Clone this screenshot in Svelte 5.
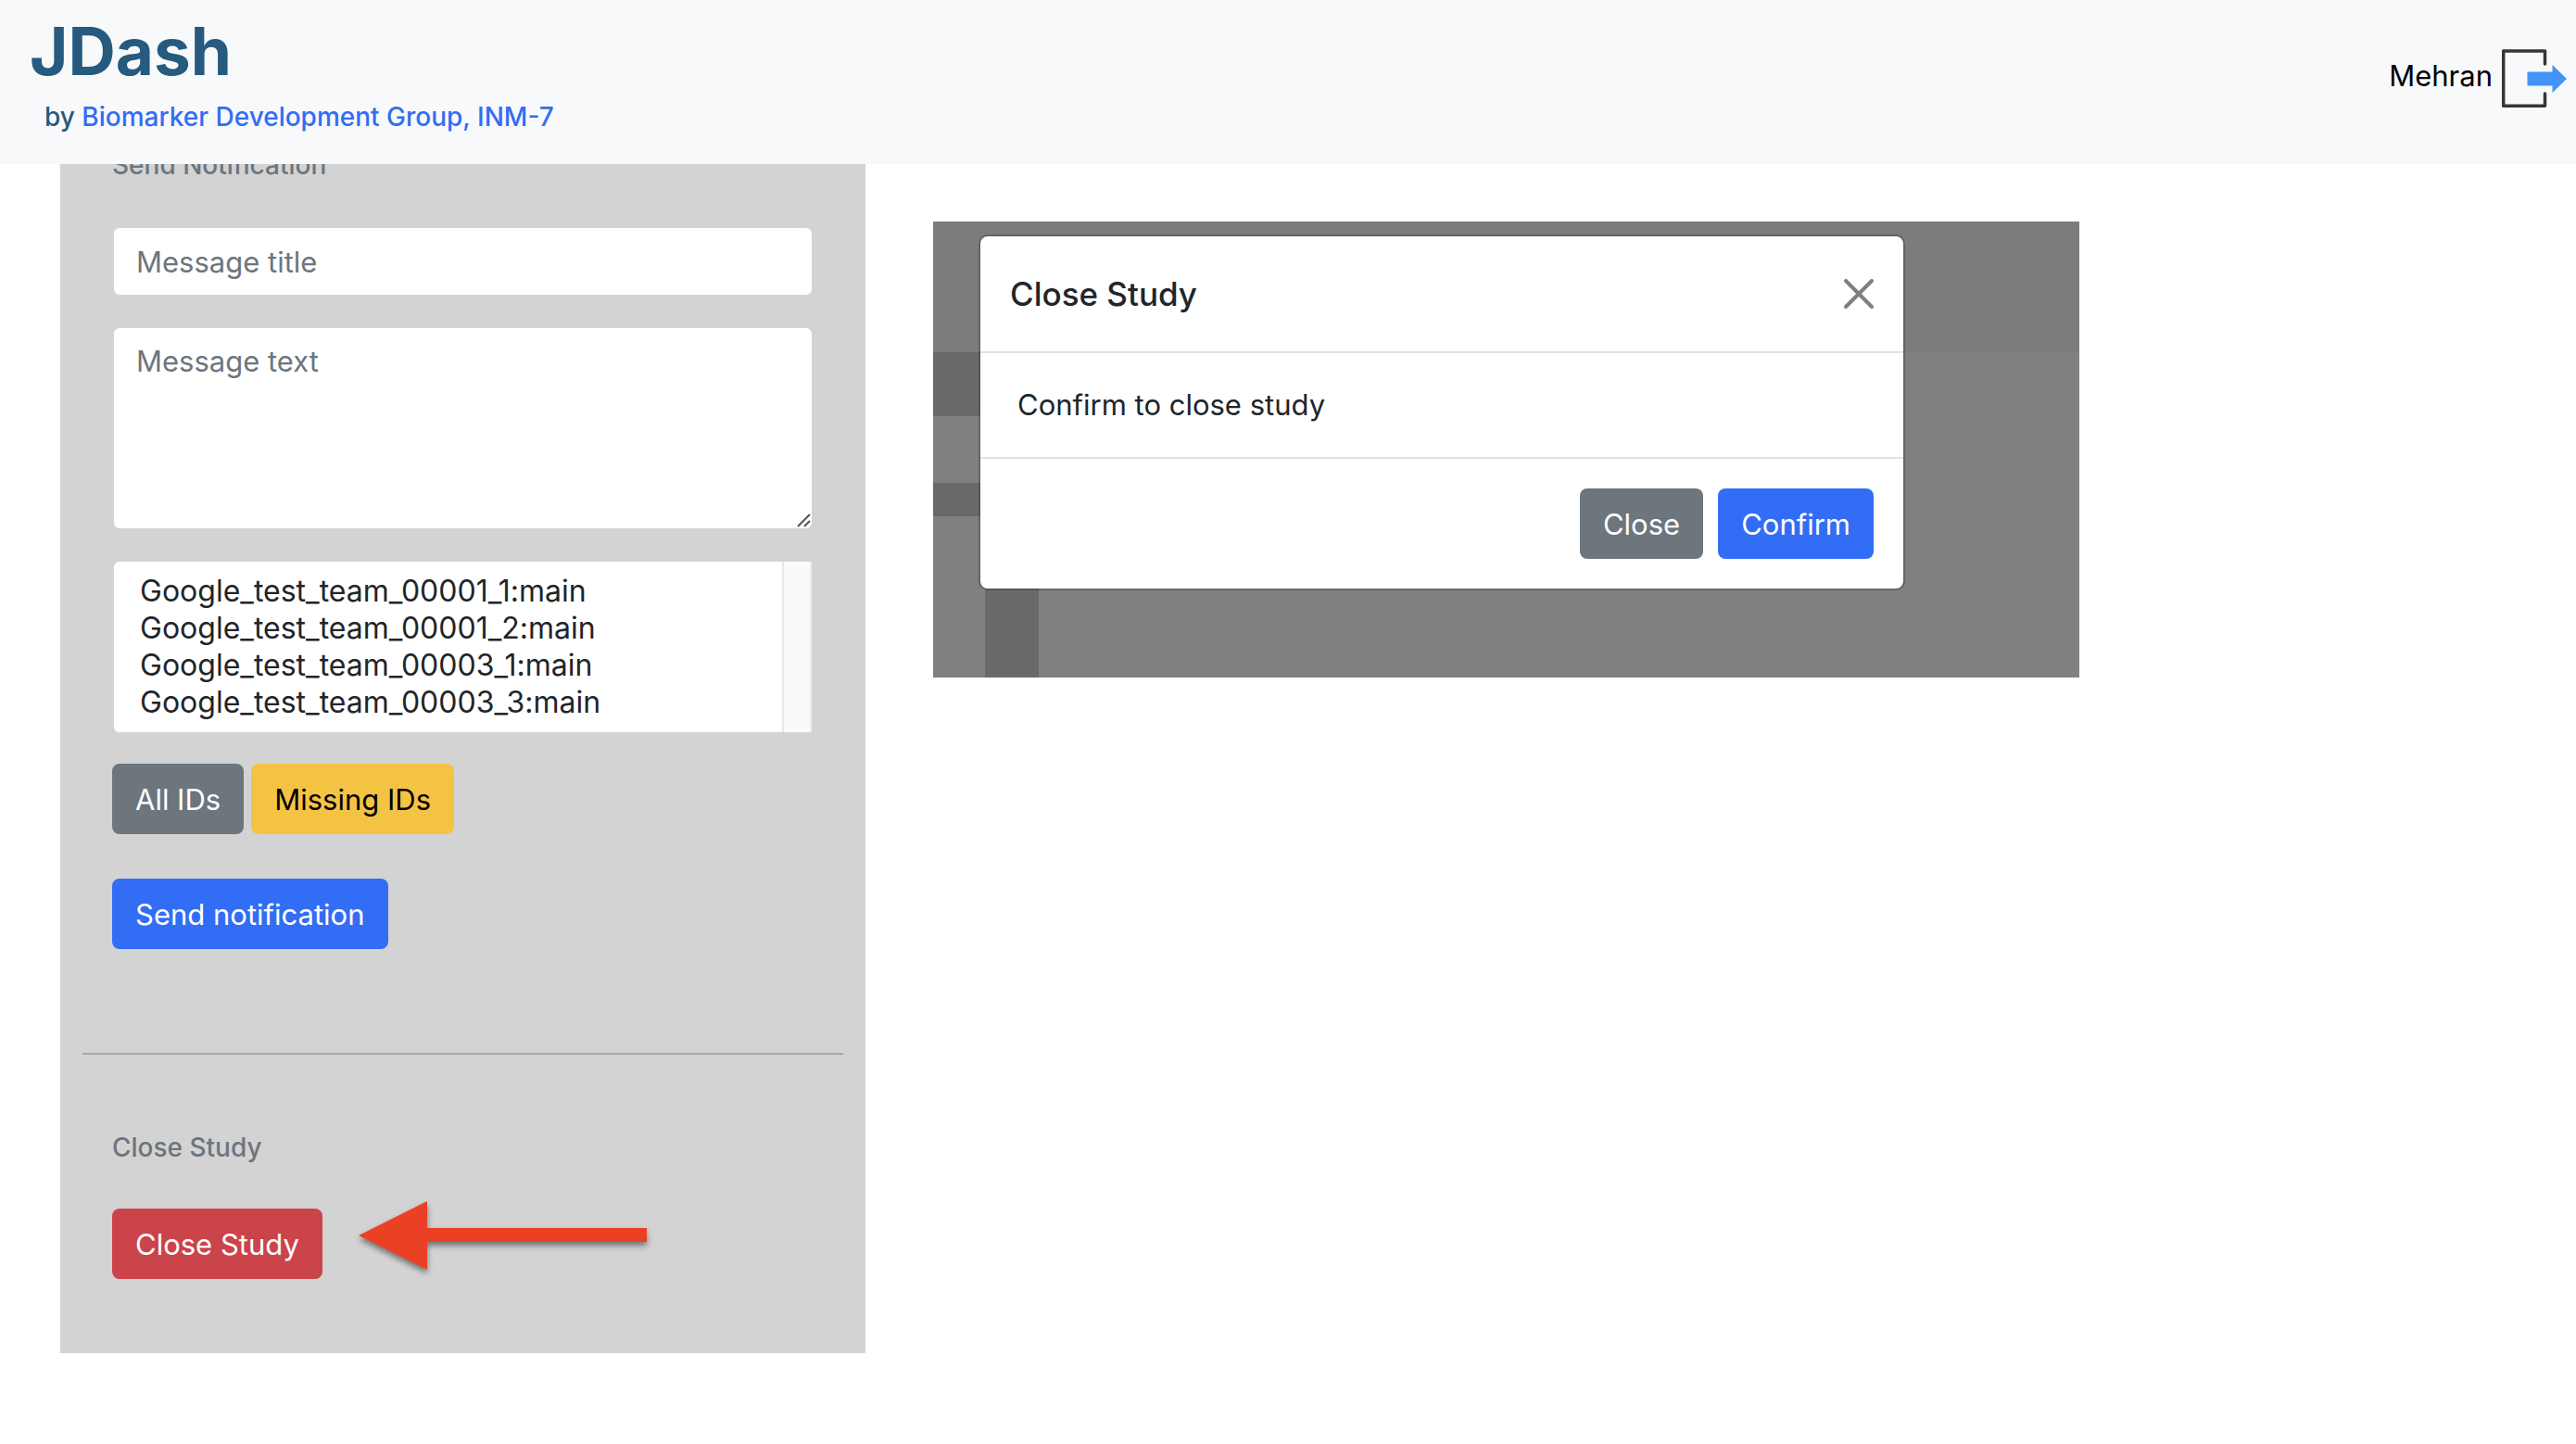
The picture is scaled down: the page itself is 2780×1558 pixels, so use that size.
<script>
  const ids = [
    'Google_test_team_00001_1:main',
    'Google_test_team_00001_2:main',
    'Google_test_team_00003_1:main',
    'Google_test_team_00003_3:main'
  ];
  let title = $state('');
  let text = $state('');
  let receivers = $state([]);
</script>

<header class="topbar">
  <div class="brand">
    <h1>JDash</h1>
    <p class="byline">by <a href="#group">Biomarker Development Group, INM-7</a></p>
  </div>
  <button class="logout" type="button" aria-label="Log out Mehran">
    <span>Mehran</span>
    <svg class="exit" viewBox="0 0 72 66" aria-hidden="true">
      <path d="M46.500 17V3H1.700V62.300H46.500V49" fill="none" stroke="#353735" stroke-width="3.500" stroke-linecap="round" stroke-linejoin="round" />
      <path d="M27.500 25.500H54.500V18L70 33L54.500 48V40.500H27.500Z" fill="#4494f8" />
    </svg>
  </button>
</header>

<main class="page">
  <section class="panel">
    <form class="notify" onsubmit={(e) => e.preventDefault()}>
      <h2>Send Notification</h2>
      <input class="field" type="text" placeholder="Message title" aria-label="Message title" bind:value={title} />
      <div class="area">
        <textarea class="field" placeholder="Message text" aria-label="Message text" bind:value={text}></textarea>
        <svg class="grip" viewBox="0 0 16 16" aria-hidden="true">
          <path d="M2 15L15 2M9 15L15 9" stroke="#555" stroke-width="2" />
        </svg>
      </div>
      <div class="list">
        <select multiple size="4" aria-label="Receivers" bind:value={receivers}>
          {#each ids as id}
            <option value={id}>{id}</option>
          {/each}
        </select>
        <span class="track"></span>
      </div>
      <div class="row">
        <button class="btn secondary" type="button">All IDs</button>
        <button class="btn warning" type="button">Missing IDs</button>
      </div>
      <button class="btn primary send" type="submit">Send notification</button>
    </form>
    <hr />
    <div class="closing">
      <h2>Close Study</h2>
      <div class="row pointed">
        <button class="btn danger" type="button">Close Study</button>
        <svg class="pointer" viewBox="0 0 312 76" aria-hidden="true">
          <path d="M0 37L74 0V29H311V44H74V74Z" fill="#ea4025" />
        </svg>
      </div>
    </div>
  </section>

  <section class="backdrop">
    <span class="shade head"></span>
    <span class="shade upper"></span>
    <span class="shade middle"></span>
    <span class="shade lower"></span>
    <div class="modal" role="dialog" aria-labelledby="modal-title">
      <div class="modal-head">
        <h3 id="modal-title">Close Study</h3>
        <button class="dismiss" type="button" aria-label="Dismiss">
          <svg viewBox="0 0 32 32" aria-hidden="true">
            <path d="M2 2L30 30M30 2L2 30" stroke="#7f7f7f" stroke-width="4" stroke-linecap="round" />
          </svg>
        </button>
      </div>
      <p class="modal-body">Confirm to close study</p>
      <div class="modal-foot">
        <button class="btn secondary" type="button">Close</button>
        <button class="btn primary" type="button">Confirm</button>
      </div>
    </div>
  </section>
</main>

<style>
  :global(body) {
    background: #fff;
    color: #212529;
    font-family: Inter, 'Liberation Sans', sans-serif;
    font-size: 31px;
    line-height: 48px;
  }
  :global(*) {
    box-sizing: border-box;
  }
  h1, h2, h3, p {
    margin: 0;
  }
  input, textarea, select, button {
    font: inherit;
    margin: 0;
  }
  .topbar {
    position: relative;
    z-index: 1;
    display: flex;
    justify-content: space-between;
    align-items: flex-start;
    min-height: 177px;
    padding: 10px 8px 0 32px;
    background: #f8f9fb;
  }
  h1 {
    color: #265a7e;
    font-size: 71px;
    line-height: 90px;
    font-weight: 700;
  }
  .byline {
    padding-left: 16px;
    color: #265a7e;
    font-size: 28px;
    line-height: 52px;
    font-weight: 500;
  }
  .byline a {
    color: #326df5;
    text-decoration: none;
  }
  .logout {
    display: flex;
    align-items: flex-start;
    gap: 10px;
    margin-top: 42px;
    padding: 0;
    border: 0;
    background: none;
    color: #000;
    line-height: 60px;
  }
  .exit {
    width: 72px;
    height: 66px;
  }
  .page {
    display: grid;
    grid-template-columns: 869fr 1237fr 463fr;
    column-gap: 73px;
    align-items: start;
    padding-left: 65px;
  }
  .panel {
    padding: 0 24px 80px;
    background: #d3d3d3;
    overflow: hidden;
  }
  .notify, .closing {
    display: flex;
    flex-direction: column;
    align-items: flex-start;
    padding: 0 32px;
  }
  h2 {
    color: #6d757d;
    font-size: 28px;
    line-height: 40px;
    font-weight: 500;
  }
  .notify h2 {
    margin: -19px 0 46px;
  }
  .field {
    display: block;
    width: 100%;
    height: 76px;
    padding: 12px 24px;
    border: 2px solid #ced4da;
    border-radius: 8px;
    background: #fff;
    color: #212529;
    resize: none;
  }
  .field::placeholder {
    color: #6d757d;
    opacity: 1;
  }
  .area {
    position: relative;
    width: 100%;
    margin: 32px 0;
  }
  .area .field {
    height: 220px;
  }
  .grip {
    position: absolute;
    right: 3px;
    bottom: 3px;
    width: 16px;
    height: 16px;
  }
  .list {
    display: flex;
    width: 100%;
    height: 188px;
    border: 2px solid #ced4da;
    border-radius: 8px 0 0 8px;
    background: #fff;
    overflow: hidden;
  }
  select {
    flex: 1;
    height: 184px;
    padding: 12px 24px;
    border: 0;
    outline: 0;
    background: #fff;
    color: #212529;
    font-size: 32px;
    overflow: hidden;
  }
  option {
    min-height: 40px;
    padding: 0 4px;
    line-height: 40px;
  }
  .track {
    width: 32px;
    border-left: 2px solid #e8e8e8;
    border-right: 2px solid #ededed;
    background: #fafafa;
  }
  .row {
    display: flex;
    gap: 8px;
    margin-top: 32px;
  }
  .btn {
    height: 76px;
    padding: 1px 25px 0;
    border: 0;
    border-radius: 8px;
    color: #fff;
    white-space: nowrap;
  }
  .primary { background: #326df5; }
  .secondary { background: #6d757d; }
  .warning { background: #f5c344; color: #000; }
  .danger { background: #cb444a; }
  .send {
    margin-top: 48px;
  }
  hr {
    height: 2px;
    margin: 112px 0 80px;
    border: 0;
    background: #a6a6a6;
  }
  .closing .row {
    margin-top: 46px;
  }
  .pointed {
    align-items: flex-start;
    gap: 39px;
  }
  .pointer {
    flex: none;
    width: 312px;
    height: 76px;
    margin-top: -8px;
    overflow: visible;
    filter: drop-shadow(0 4px 3px rgba(0, 0, 0, 0.45));
  }
  .backdrop {
    position: relative;
    margin-top: 62px;
    padding: 14px 188px 94px 49px;
    background: #808080;
  }
  .shade {
    position: absolute;
    left: 0;
    background: #696969;
  }
  .head {
    top: 0;
    right: 0;
    height: 141px;
    background: #7c7c7c;
  }
  .upper {
    top: 141px;
    width: 60px;
    height: 69px;
    border-bottom: 2px solid #66696c;
  }
  .middle {
    top: 282px;
    width: 60px;
    height: 36px;
    border-top: 2px solid #66696c;
    border-bottom: 2px solid #66696c;
  }
  .lower {
    left: 56px;
    bottom: 0;
    width: 58px;
    height: 100px;
  }
  .modal {
    position: relative;
    border: 2px solid rgba(0, 0, 0, 0.2);
    border-radius: 10px;
    background: #fff;
    background-clip: padding-box;
  }
  .modal-head {
    display: flex;
    justify-content: space-between;
    align-items: center;
    height: 126px;
    padding: 0 32px;
    border-bottom: 2px solid #dee2e6;
  }
  h3 {
    font-size: 35px;
    line-height: 60px;
    font-weight: 500;
  }
  .dismiss {
    display: flex;
    padding: 0;
    border: 0;
    background: none;
  }
  .dismiss svg {
    width: 32px;
    height: 32px;
  }
  .modal-body {
    padding: 32px 40px;
  }
  .modal-foot {
    display: flex;
    justify-content: flex-end;
    gap: 16px;
    padding: 32px;
    border-top: 2px solid #dee2e6;
  }
</style>
